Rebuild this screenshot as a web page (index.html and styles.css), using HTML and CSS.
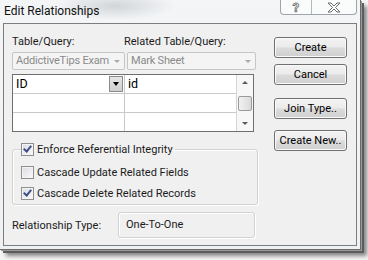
FILE: index.html
```html
<!DOCTYPE html>
<html lang="en">
<head>
  <meta charset="UTF-8" />
  <title>Edit Relationships</title>
  <link rel="stylesheet" href="styles.css">
</head>
<body>
  <div class="window">
    <div class="titlebar">
      <span class="title">Edit Relationships</span>
      <div class="caption">
        <span class="cap help">?</span>
        <span class="cap close">
          <svg width="16" height="11" viewBox="0 0 16 11">
            <path d="M2 1h3l3 3 3-3h3l-4.5 4.5L14 10h-3L8 7 5 10H2l4.5-4.5z" fill="#fff" stroke="#6b6b6b" stroke-width="1"/>
          </svg>
        </span>
      </div>
    </div>

    <div class="client">
      <div class="main">
        <div class="labels">
          <span class="col-left">Table/Query:</span>
          <span>Related Table/Query:</span>
        </div>

        <div class="combos">
          <div class="combo left">AddictiveTips Exam<span class="arrow"></span></div>
          <div class="combo right">Mark Sheet<span class="arrow"></span></div>
        </div>

        <div class="grid">
          <div class="cells">
            <div class="row">
              <div class="cell first">ID<span class="dropbtn"><span class="tri"></span></span></div>
              <div class="cell">id</div>
            </div>
            <div class="row">
              <div class="cell first"></div>
              <div class="cell"></div>
            </div>
            <div class="row last">
              <div class="cell first"></div>
              <div class="cell"></div>
            </div>
          </div>
          <div class="scrollbar">
            <span class="sb-up"></span>
            <span class="thumb"></span>
            <span class="sb-down"></span>
          </div>
        </div>

        <fieldset class="options">
          <legend>
            <label class="check"><span class="box on"></span>Enforce Referential Integrity</label>
          </legend>
          <label class="check"><span class="box"></span>Cascade Update Related Fields</label>
          <label class="check"><span class="box on"></span>Cascade Delete Related Records</label>
        </fieldset>

        <div class="reltype">
          <span class="rel-label">Relationship Type:</span>
          <div class="rel-box">One-To-One</div>
        </div>
      </div>

      <div class="actions">
        <button class="btn create">Create</button>
        <button class="btn cancel">Cancel</button>
        <button class="btn join">Join Type..</button>
        <button class="btn createnew">Create New..</button>
      </div>
    </div>
  </div>
</body>
</html>
```

FILE: styles.css
```css
body {
  margin: 0;
  width: 368px;
  height: 260px;
  overflow: hidden;
  background: #f4f4f4;
  font-family: Roboto, "Liberation Sans", sans-serif;
  font-size: 11px;
  color: #1b1b1b;
}

.window {
  width: 360px;
  height: 249px;
  border-right: 1px solid #6a6a6a;
  border-bottom: 1px solid #6a6a6a;
  background:
    radial-gradient(ellipse 60px 14px at 115px 6px, rgba(150,155,160,0.35), rgba(150,155,160,0)),
    linear-gradient(#f3f5f7, #eef1f4);
  box-shadow: 1px 1px 0 #9a9a9a, 3px 3px 0 #5c5c5c, 6px 6px 4px rgba(0,0,0,0.45);
}

/* title bar */
.titlebar {
  height: 23px;
  display: flex;
  align-items: flex-start;
}

.title {
  margin: 3px 0 0 4px;
  font-size: 12px;
  color: #101010;
  line-height: 16px;
}

.caption {
  margin-left: auto;
  margin-right: 3px;
  display: flex;
  height: 14px;
  border: 1px solid #9ea4aa;
  border-top: none;
  border-radius: 0 0 4px 4px;
  background: rgba(255,255,255,0.55);
}

.cap {
  display: flex;
  align-items: center;
  justify-content: center;
  height: 14px;
}

.help {
  width: 30px;
  border-right: 1px solid #b3b8bd;
  font-size: 13px;
  font-weight: bold;
  color: #fff;
  -webkit-text-stroke: 0.8px #6b6b6b;
}

.close {
  width: 44px;
}

/* client area */
.client {
  margin: 0 3px 0 3px;
  height: 221px;
  border: 1px solid #7d7d7d;
  background: #f0f0f0;
  display: flex;
  padding: 0 9px 0 8px;
}

.main {
  width: 244px;
}

.labels {
  display: flex;
  margin-top: 11px;
  height: 14px;
  line-height: 14px;
}

.col-left {
  width: 112px;
}

.combos {
  display: flex;
  gap: 2px;
  margin-top: 3px;
}

.combo {
  position: relative;
  height: 16px;
  line-height: 16px;
  border: 1px solid #c6c6c6;
  border-radius: 2px;
  background: #f4f4f4;
  color: #8a8a8a;
  padding-left: 3px;
  box-sizing: content-box;
  letter-spacing: -0.2px;
}

.combo.left { width: 108px; }
.combo.right { width: 124px; }

.combo .arrow {
  position: absolute;
  right: 4px;
  top: 7px;
  border-left: 3px solid transparent;
  border-right: 3px solid transparent;
  border-top: 3px solid #a9a9a9;
}

/* grid */
.grid {
  margin-top: 4px;
  width: 240px;
  height: 56px;
  border: 1px solid #6f6f6f;
  background: #fff;
  display: flex;
}

.cells {
  flex: 1;
}

.row {
  display: flex;
  height: 18px;
  border-bottom: 1px solid #c9c9c9;
}

.row.last {
  border-bottom: none;
}

.cell {
  position: relative;
  flex: 1;
  padding-left: 3px;
  line-height: 18px;
  font-size: 12.5px;
  color: #000;
}

.cell.first {
  flex: none;
  width: 108px;
  border-right: 1px solid #c9c9c9;
}

.dropbtn {
  position: absolute;
  right: 1px;
  top: 1px;
  width: 14px;
  height: 16px;
  box-sizing: border-box;
  border: 1px solid #8b8b8b;
  background: linear-gradient(#e6e6e6, #cfcfcf);
  display: flex;
  align-items: center;
  justify-content: center;
}

.tri {
  border-left: 3.5px solid transparent;
  border-right: 3.5px solid transparent;
  border-top: 4px solid #000;
}

.scrollbar {
  width: 16px;
  border-left: 1px solid #d4d4d4;
  background: #f7f7f7;
  position: relative;
}

.sb-up, .sb-down {
  position: absolute;
  left: 5px;
  border-left: 3px solid transparent;
  border-right: 3px solid transparent;
}

.sb-up {
  top: 6px;
  border-bottom: 3px solid #5a5a5a;
}

.sb-down {
  bottom: 6px;
  border-top: 3px solid #5a5a5a;
}

.thumb {
  position: absolute;
  left: 1px;
  top: 21px;
  width: 12px;
  height: 13px;
  border: 1px solid #9b9b9b;
  border-radius: 2px;
  background: linear-gradient(90deg, #f2f2f2, #dadada);
}

/* options */
.options {
  margin: 10px 0 0 0;
  padding: 5px 0 0 8px;
  width: 236px;
  border: 1px solid #d2d2d2;
  border-radius: 3px;
  box-shadow: inset 1px 1px 0 #fff, 1px 1px 0 #fff;
}

.options legend {
  padding: 0 2px 0 0;
  margin-left: 0;
}

.check {
  display: flex;
  align-items: center;
  height: 22px;
  gap: 3px;
}

.check:last-child {
  height: 21px;
}

.options legend .check {
  height: 14px;
}

.box {
  width: 11px;
  height: 11px;
  border: 1px solid #8f8f8f;
  background: linear-gradient(135deg, #d9dbe0, #fbfbfb);
  box-shadow: inset 0 0 0 1px #f4f4f4;
  position: relative;
}

.box.on::after {
  content: "";
  position: absolute;
  left: 3px;
  top: 0px;
  width: 3px;
  height: 6px;
  border-right: 2px solid #3d4f88;
  border-bottom: 2px solid #3d4f88;
  transform: rotate(40deg);
}

/* relationship type */
.reltype {
  display: flex;
  align-items: center;
  margin-top: 7px;
}

.rel-label {
  width: 106px;
}

.rel-box {
  width: 128px;
  height: 24px;
  line-height: 24px;
  padding-left: 7px;
  border: 1px solid #d2d2d2;
  border-radius: 3px;
  box-shadow: inset 1px 1px 0 #fff, 1px 1px 0 #fff;
  color: #1b1b1b;
}

/* buttons */
.actions {
  margin-left: auto;
  width: 73px;
  display: flex;
  flex-direction: column;
}

.btn {
  height: 21px;
  padding: 0;
  font-family: inherit;
  font-size: 11px;
  color: #000;
  border: 1px solid #707070;
  border-radius: 3px;
  background: linear-gradient(#f3f3f3 0%, #ebebeb 48%, #dcdcdc 52%, #cfcfcf 100%);
  box-shadow: inset 0 0 0 1px #fafafa;
}

.create { margin-top: 13px; }
.cancel { margin-top: 6px; }
.join { margin-top: 13px; }
.createnew { margin-top: 11px; }
```
